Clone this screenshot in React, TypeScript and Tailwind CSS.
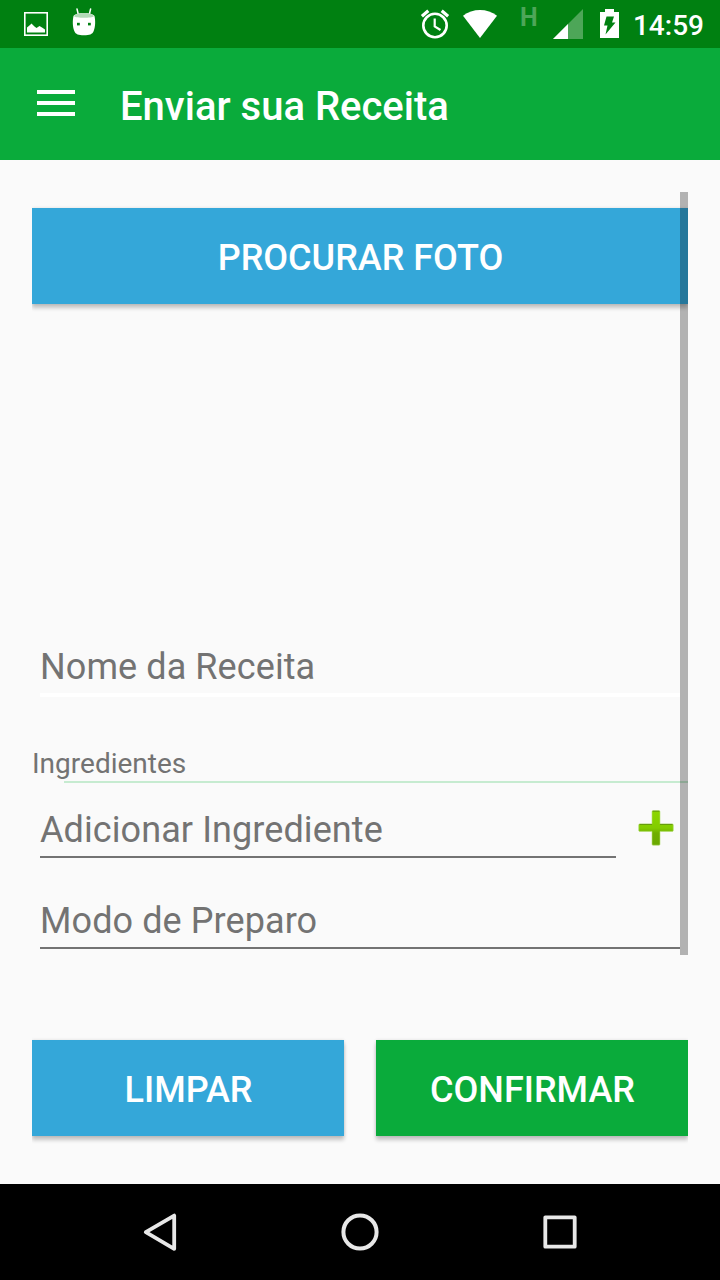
import React from 'react';

interface FieldProps {
  label: string;
  name: string;
}

function Field({ label, name }: FieldProps) {
  return (
    <input
      type="text"
      name={name}
      placeholder={label}
      className="block w-full min-w-0 bg-transparent p-0 text-4xl leading-[42px] tracking-[0.09px] placeholder:text-[#737373] placeholder:opacity-100 outline-none"
    />
  );
}

interface ActionButtonProps {
  children: React.ReactNode;
  className: string;
}

function ActionButton({ children, className }: ActionButtonProps) {
  return (
    <button
      type="button"
      className={`h-24 pt-[3px] pl-px text-center text-4xl font-medium text-white shadow-[0_4px_4px_rgba(0,0,0,0.22),0_0_3px_rgba(0,0,0,0.12)] ${className}`}
    >
      {children}
    </button>
  );
}

function StatusBar() {
  return (
    <div className="flex h-12 items-start bg-[#008011] text-white">
      <svg className="ml-6 mt-3 h-6 w-6" viewBox="0 0 24 24">
        <rect x="0.8" y="0.8" width="22.4" height="22.4" fill="none" stroke="currentColor" strokeWidth="1.6" />
        <path d="M3 20.5v-5l3-2.5 1.5-1.5 3 3 2 1.5 3-2 2.5 1.5 3 2v3z" fill="currentColor" />
      </svg>
      <svg className="ml-6 mt-2 h-7 w-6" viewBox="0 0 24 28">
        <path d="M5 1l1.2 5M18.6 1l-1.2 5" fill="none" stroke="currentColor" strokeWidth="1.5" strokeLinecap="round" />
        <path d="M1.5 8C4 4 20 4 22.5 8c1 4 1 11-.8 15-1.5 3.5-4 4.2-9.7 4.2S3.8 26.5 2.3 23C.5 19 .5 12 1.5 8z" fill="currentColor" />
        <path d="M1.9 8.2C4 3.9 20 3.9 22.1 8.2c-2.5 2-17.7 2-20.2 0z" fill="#b3dab8" />
        <rect x="5" y="14.8" width="2.8" height="2.6" fill="#008011" />
        <rect x="16" y="14.8" width="2.8" height="2.6" fill="#008011" />
      </svg>

      <svg className="ml-[324px] mt-2 h-8 w-[30px]" viewBox="0 0 30 32" fill="none" stroke="currentColor">
        <circle cx="15" cy="17.5" r="11.7" strokeWidth="2.6" />
        <path d="M1.9 8.2l6.4-5.4M28.100 8.200l-6.400-5.400" strokeWidth="3.2" />
        <path d="M14.7 10.5v8l5.800 3.500" strokeWidth="2.2" />
      </svg>
      <svg className="ml-[13px] mt-2 h-8 w-[34px]" viewBox="0 0 34 32">
        <path d="M17 30L0 7.8C9.5.2 24.5.2 34 7.8z" fill="currentColor" />
      </svg>
      <span className="ml-[23px] mt-[3px] w-[17px] text-[25px] leading-[30px] font-bold text-[#4da658]">H</span>
      <svg className="ml-4 mt-[9px] h-[30px] w-[30px]" viewBox="0 0 30 30">
        <path d="M30 0v30H0z" fill="#4da658" />
        <path d="M15 15v15H0z" fill="currentColor" />
      </svg>
      <svg className="ml-[17px] mt-[9px] h-[29px] w-[19px]" viewBox="0 0 19 29">
        <path d="M5 0h9v3h5v26H0V3h5z" fill="currentColor" />
        <path d="M6.5 7.5H14l-2 6h3.5l-10 12 2-9H4z" fill="#008011" />
      </svg>
      <span className="ml-auto mr-4 mt-[10px] text-[28px] leading-[32px] font-medium">14:59</span>
    </div>
  );
}

function NavigationBar() {
  return (
    <div className="flex h-24 items-center justify-between bg-black px-[140px] text-[#e8e8e8]">
      <svg className="h-10 w-10" viewBox="0 0 40 40" fill="none" stroke="currentColor" strokeWidth="3.8" strokeLinejoin="round">
        <path d="M5.8 20.2L34.200 3.600v33.200z" />
      </svg>
      <svg className="h-10 w-10" viewBox="0 0 40 40" fill="none" stroke="currentColor" strokeWidth="4">
        <circle cx="20" cy="20" r="16.600" />
      </svg>
      <svg className="h-10 w-10" viewBox="0 0 40 40" fill="none" stroke="currentColor" strokeWidth="3.8" strokeLinejoin="round">
        <rect x="5.3" y="5.3" width="29.4" height="29.4" />
      </svg>
    </div>
  );
}

function PlusIcon() {
  return (
    <svg className="h-10 w-10" viewBox="0 0 40 40">
      <defs>
        <linearGradient id="plus-fill" x1="0" y1="0" x2="0" y2="1">
          <stop offset="0" stopColor="#8cd600" />
          <stop offset="0.5" stopColor="#83cc00" />
          <stop offset="0.65" stopColor="#6fae00" />
          <stop offset="1" stopColor="#6aa800" />
        </linearGradient>
      </defs>
      <path
        d="M17 2.8h6q1 0 1 1V16h12.3q1 0 1 1v5.4q0 1-1 1H24v12.8q0 1-1 1h-6q-1 0-1-1V23.4H3.7q-1 0-1-1V17q0-1 1-1H16V3.8q0-1 1-1z"
        fill="url(#plus-fill)"
        stroke="#b5df72"
        strokeWidth="0.6"
      />
      <path d="M3.5 16.4H16M24 16.4h12.5M16.5 3.2h7" stroke="#62960a" strokeWidth="1" />
    </svg>
  );
}

export default function App() {
  return (
    <div className="flex h-[1280px] w-[720px] flex-col overflow-hidden bg-[#fafafa] font-['Roboto',sans-serif]">
      <StatusBar />

      <header className="flex h-28 items-center bg-[#0aab3b] text-white">
        <button type="button" className="ml-[37px] flex w-[38px] -translate-y-px flex-col gap-[7px]">
          <span className="h-1 bg-white" />
          <span className="h-1 bg-white" />
          <span className="h-1 bg-white" />
        </button>
        <h1 className="ml-[45px] pt-1.5 text-[40px] leading-[48px] font-medium">Enviar sua Receita</h1>
      </header>

      <main className="flex flex-1 flex-col px-8 pt-8">
        <div className="relative flex h-[763px] flex-col overflow-hidden pt-4">
          <ActionButton className="w-full shrink-0 bg-[#34a7d9]">PROCURAR FOTO</ActionButton>

          {/* Photo preview area */}
          <div className="h-[342px] shrink-0" />

          <div className="mx-2 border-b-4 border-white pb-[5px]">
            <Field label="Nome da Receita" name="nome" />
          </div>

          <div className="mt-[50px] h-[34px] text-[28px] leading-[34px] text-[#737373]">Ingredientes</div>
          <div className="ml-8 h-0.5 shrink-0 bg-[#c6ebd0]" />

          <div className="mt-[26px] flex h-[49px] items-start">
            <div className="ml-2 w-[576px] border-b-2 border-[#737373] pb-[5px]">
              <Field label="Adicionar Ingrediente" name="ingrediente" />
            </div>
            <button type="button" className="-mt-px ml-5">
              <PlusIcon />
            </button>
          </div>

          <div className="mx-2 mt-[42px] border-b-2 border-[#737373] pb-[5px]">
            <Field label="Modo de Preparo" name="preparo" />
          </div>

          {/* Scrollbar thumb */}
          <div className="absolute top-0 right-0 h-full w-2 bg-black/[0.285]" />
        </div>

        <div className="mt-[75px] flex gap-8 overflow-hidden pt-2.5 pb-4">
          <ActionButton className="flex-1 bg-[#34a7d9]">LIMPAR</ActionButton>
          <ActionButton className="flex-1 bg-[#0aab3b]">CONFIRMAR</ActionButton>
        </div>
      </main>

      <NavigationBar />
    </div>
  );
}
